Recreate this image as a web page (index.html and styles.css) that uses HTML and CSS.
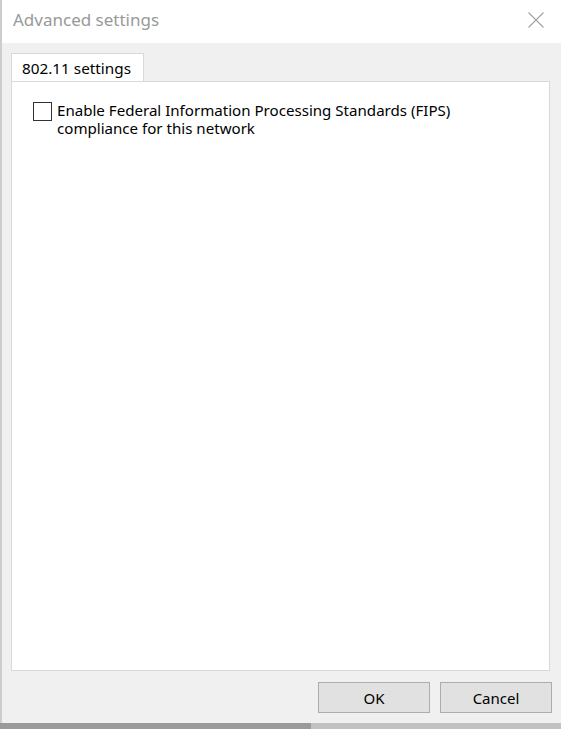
FILE: index.html
```html
<!DOCTYPE html>
<html>
<head>
<meta charset="utf-8">
<title>Advanced settings</title>
<link rel="stylesheet" href="styles.css">
</head>
<body>
<div class="desktop">
  <div class="dialog">
    <div class="titlebar">
      <span class="title">Advanced settings</span>
      <svg class="close" width="16" height="16" viewBox="0 0 16 16">
        <path d="M0.5 0.5 L15.5 15.5 M15.5 0.5 L0.5 15.5" stroke="#a0a0a0" stroke-width="1.1" fill="none"/>
      </svg>
    </div>
    <div class="content">
      <div class="tabs">
        <div class="tab">802.11 settings</div>
      </div>
      <div class="panel">
        <label class="check">
          <span class="box"></span>
          <span class="label">Enable Federal Information Processing Standards (FIPS)<br>compliance for this network</span>
        </label>
      </div>
      <div class="buttons">
        <button class="btn">OK</button>
        <button class="btn">Cancel</button>
      </div>
    </div>
  </div>
</div>
</body>
</html>
```
FILE: styles.css
```css
html, body {
  margin: 0;
  padding: 0;
}
body {
  width: 561px;
  height: 729px;
  overflow: hidden;
  font-family: "Noto Sans", "Open Sans", sans-serif;
}
.desktop {
  height: 729px;
  background: linear-gradient(to right, #9a9a9a 0, #9a9a9a 311px, #c2c2c2 311px);
  display: flex;
  flex-direction: column;
}
.dialog {
  height: 723px;
  border-left: 2px solid #cdcdcd;
  display: flex;
  flex-direction: column;
  background: #f0f0f0;
}
.titlebar {
  height: 43px;
  background: #fff;
  display: flex;
  align-items: flex-start;
  justify-content: space-between;
  flex-shrink: 0;
}
.title {
  margin: 9px 0 0 11px;
  font-size: 17px;
  color: #999;
  line-height: 22px;
}
.close {
  margin: 12px 17px 0 0;
}
.content {
  flex: 1;
  display: flex;
  flex-direction: column;
  padding: 10px 11px 10px 9px;
}
.tabs {
  display: flex;
  height: 28px;
  position: relative;
  z-index: 1;
}
.tab {
  width: 133px;
  height: 28px;
  background: #fff;
  border: 1px solid #d9d9d9;
  border-bottom: none;
  font-size: 15.3px;
  color: #000;
  padding-left: 10px;
  box-sizing: border-box;
  line-height: 29px;
}
.panel {
  height: 590px;
  box-sizing: border-box;
  background: #fff;
  border: 1px solid #d9d9d9;
  padding: 20px 20px 0 21px;
}
.check {
  display: flex;
  align-items: flex-start;
  gap: 5px;
}
.box {
  width: 19px;
  height: 19px;
  box-sizing: border-box;
  border: 1px solid #333;
  background: #fff;
  flex-shrink: 0;
}
.label {
  font-size: 15.1px;
  line-height: 18px;
  color: #000;
  margin-top: -1px;
}
.buttons {
  display: flex;
  justify-content: flex-end;
  gap: 10px;
  margin-top: 11px;
  margin-right: -2px;
}
.btn {
  width: 112px;
  height: 31px;
  box-sizing: border-box;
  background: #e1e1e1;
  border: 1px solid #adadad;
  font-family: "Noto Sans", "Open Sans", sans-serif;
  font-size: 15px;
  color: #000;
  padding: 0;
}
```
